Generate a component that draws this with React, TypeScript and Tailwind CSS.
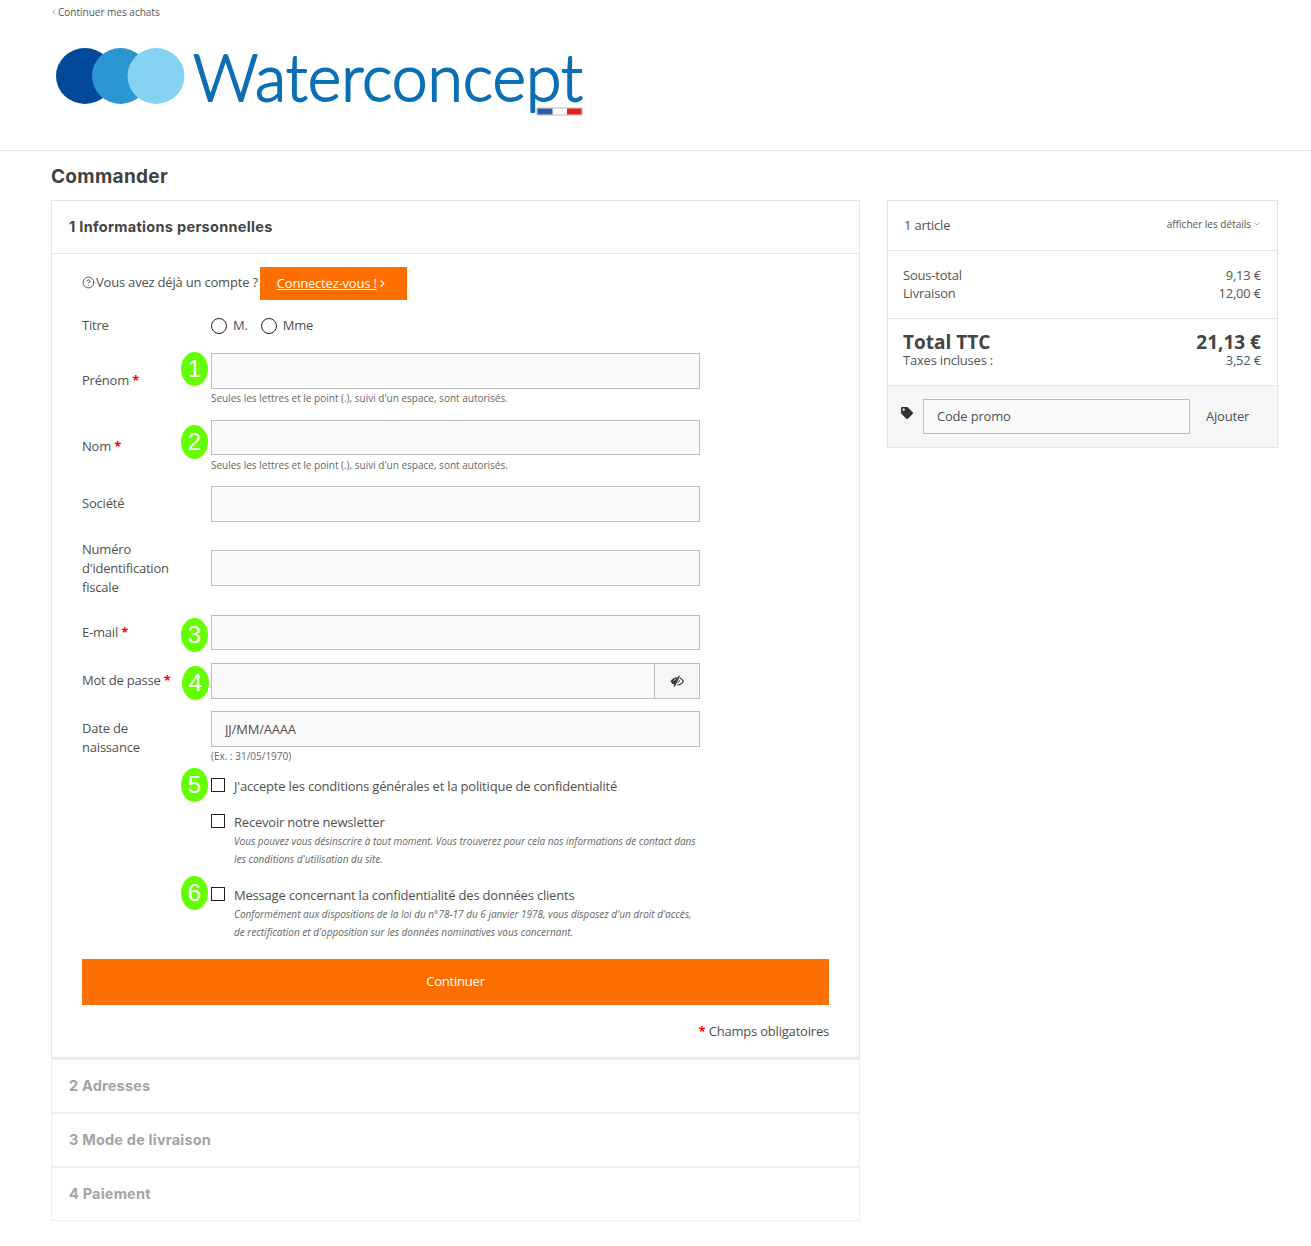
import React from 'react';
import { ChevronDown, ChevronLeft, ChevronRight, CircleHelp } from 'lucide-react';
import { FaTag } from 'react-icons/fa';

const Star = () => <span className="font-bold text-[#ff0000]">*</span>;

const Badge = ({ n, top }: { n: number; top: number }) => (
  <span
    className="absolute left-[-30px] flex h-[34px] w-[27px] items-center justify-center rounded-[50%] bg-[#66ff00] font-['Liberation_Sans',sans-serif] text-[24px] leading-none text-white"
    style={{ top }}
  >
    {n}
  </span>
);

const TextInput = ({ placeholder, h = 'h-[36px]' }: { placeholder?: string; h?: string }) => (
  <input
    placeholder={placeholder}
    className={`${h} block w-[489px] border border-[#bdbdbd] bg-[#fafafa] px-[13px] text-[13px] tracking-[-0.2px] text-[#505050] outline-none placeholder:text-[#505050]`}
  />
);

const Hint = ({ children, className = 'mt-[3px]' }: { children: React.ReactNode; className?: string }) => (
  <div className={`${className} text-[10px] leading-[14px] text-[#666]`}>{children}</div>
);

const Label = ({ children, className = '' }: { children: React.ReactNode; className?: string }) => (
  <label className={`block w-[129px] shrink-0 text-[13px] leading-[19px] tracking-[-0.2px] text-[#505050] ${className}`}>{children}</label>
);

const Check = ({ label, badge, children, className = '' }: { label: string; badge?: React.ReactNode; children?: React.ReactNode; className?: string }) => (
  <div className={`relative ml-[129px] w-[489px] ${className}`}>
    {badge}
    <span className="absolute left-0 top-px block h-[14px] w-[14px] border border-[#222] bg-white" />
    <div className="pl-[23px] text-[13px] leading-[19px] tracking-[-0.2px] text-[#505050]">{label}</div>
    {children && <div className="pl-[23px] text-[10px] italic leading-[18px] text-[#666]">{children}</div>}
  </div>
);

const EyeOff = () => (
  <svg width="14" height="12" viewBox="0 0 14 12" className="text-[#333]">
    <path d="M0.500 6.200C2.300 3.500 5 2.100 7.800 2.200L5 10C3 9.500 1.500 8 0.500 6.200Z" fill="currentColor" />
    <path d="M3.600 5.800C4 4.900 4.800 4.300 5.800 4.100" stroke="#f6f6f6" strokeWidth="0.900" fill="none" />
    <path d="M4.300 11.500L9.500 0.700" stroke="currentColor" strokeWidth="1.300" fill="none" />
    <path d="M9.800 3C11.300 3.600 12.500 4.800 13.400 6.200C12 8.400 9.800 9.800 7.200 10" stroke="currentColor" strokeWidth="1.200" fill="none" />
    <path d="M9.200 5.200C9.400 6.400 8.800 7.400 7.600 7.800" stroke="currentColor" strokeWidth="1" fill="none" />
  </svg>
);

const Logo = () => (
  <svg width="540" height="80" viewBox="0 0 540 80" className="block overflow-visible">
    <ellipse cx="34" cy="34" rx="29" ry="28" fill="#03499a" />
    <ellipse cx="69.500" cy="34" rx="28.500" ry="28" fill="#2a96d2" />
    <ellipse cx="105" cy="34" rx="28.500" ry="28" fill="#86d2f3" />
    <text
      x="142"
      y="59"
      fontFamily="Lato, sans-serif"
      fontWeight="300"
      fontSize="66"
      fill="#0a6fb5"
      stroke="#0a6fb5"
      strokeWidth="1.800"
      strokeLinejoin="round"
      textLength="390"
      lengthAdjust="spacingAndGlyphs"
    >
      Waterconcept
    </text>
    <rect x="486" y="66" width="45" height="7" fill="#fff" stroke="#bbb" strokeWidth="1" />
    <rect x="486.500" y="66.500" width="15" height="6" fill="#2f5aa5" />
    <rect x="516" y="66.500" width="14.500" height="6" fill="#e3201b" />
  </svg>
);

const Step = ({ title }: { title: string }) => (
  <div className="flex h-[54px] items-center border border-b-0 border-t-2 border-[#eee] bg-white pb-[1px] pl-[17px] font-['Inter',sans-serif] text-[14.500px] font-bold tracking-[0.2px] text-[#a3a3a3] last:h-[55px] last:border-b last:pb-0">
    {title}
  </div>
);

const Row2 = ({ a, b }: { a: string; b: string }) => (
  <div className="flex justify-between text-[13px] leading-[18px] tracking-[-0.2px] text-[#555]">
    <span>{a}</span>
    <span>{b}</span>
  </div>
);

export default function App() {
  return (
    <div className="min-h-[1246px] bg-white font-['Open_Sans',sans-serif] text-[#505050]">
      <header className="h-[151px] border-b border-[#e5e5e5] pl-[51px]">
        <a className="flex items-center pt-[5px] text-[10px] leading-[14px] text-[#555]">
          <ChevronLeft size={8} strokeWidth={1.500} className="-ml-[1px]" />
          Continuer mes achats
        </a>
        <div className="mt-[23px]">
          <Logo />
        </div>
      </header>

      <main className="flex items-start pl-[51px]">
        <div className="w-[809px] shrink-0">
          <h1 className="pb-[11px] pt-[13px] font-['Inter',sans-serif] text-[19px] font-bold leading-[25px] tracking-[0.3px] text-[#414141]">
            Commander
          </h1>

          <section className="border border-[#e5e5e5] bg-white">
            <h2 className="flex h-[53px] items-center border-b border-[#e5e5e5] pl-[17px] font-['Inter',sans-serif] text-[14.500px] font-bold tracking-[0.3px] text-[#444]">
              1 Informations personnelles
            </h2>

            <div className="pl-[30px] pr-[30px]">
              <div className="flex items-center pt-[13px] text-[13px] tracking-[-0.2px] text-[#505050]">
                <CircleHelp size={13} strokeWidth={1.800} className="mr-[1px] -mt-[2px]" />
                <span className="-mt-[2px]">Vous avez déjà un compte ?</span>
                <a className="ml-[2px] flex h-[33px] w-[147px] items-center bg-[#ff6f00] pl-[17px] text-white">
                  <span className="underline">Connectez-vous !</span>
                  <ChevronRight size={11} strokeWidth={2.500} />
                </a>
              </div>

              <div className="mt-[16px] flex h-[19px] items-center">
                <Label>Titre</Label>
                <span className="h-4 w-4 rounded-full border border-[#222] bg-white" />
                <span className="ml-[6px] text-[13px] tracking-[-0.2px]">M.</span>
                <span className="ml-[13px] h-4 w-4 rounded-full border border-[#222] bg-white" />
                <span className="ml-[6px] text-[13px] tracking-[-0.2px]">Mme</span>
              </div>

              <div className="mt-[18px] flex items-start">
                <Label className="pt-[18px]">
                  Prénom <Star />
                </Label>
                <div className="relative">
                  <Badge n={1} top={-1} />
                  <TextInput />
                  <Hint className="mt-[2px]">Seules les lettres et le point (.), suivi d'un espace, sont autorisés.</Hint>
                </div>
              </div>

              <div className="mt-[15px] flex items-start">
                <Label className="pt-[17px]">
                  Nom <Star />
                </Label>
                <div className="relative">
                  <Badge n={2} top={5} />
                  <TextInput h="h-[35px]" />
                  <Hint>Seules les lettres et le point (.), suivi d'un espace, sont autorisés.</Hint>
                </div>
              </div>

              <div className="mt-[14px] flex items-center">
                <Label className="-mt-[2px]">Société</Label>
                <TextInput />
              </div>

              <div className="mt-[18px] flex items-center">
                <Label className="pr-[20px]">Numéro d'identification fiscale</Label>
                <div className="-mt-[2px]">
                  <TextInput />
                </div>
              </div>

              <div className="mt-[18px] flex items-center">
                <Label>
                  E-mail <Star />
                </Label>
                <div className="relative">
                  <Badge n={3} top={3} />
                  <TextInput h="h-[35px]" />
                </div>
              </div>

              <div className="mt-[13px] flex items-center">
                <Label className="-mt-[2px]">
                  Mot de passe <Star />
                </Label>
                <div className="relative flex h-[36px] w-[489px] border border-[#bdbdbd] bg-[#fafafa]">
                  <Badge n={4} top={2} />
                  <div className="flex-1" />
                  <span className="flex w-[45px] items-center justify-center border-l border-[#bdbdbd] bg-[#f6f6f6]">
                    <EyeOff />
                  </span>
                </div>
              </div>

              <div className="mt-[12px] flex items-start">
                <Label className="pr-[50px] pt-[8px]">Date de naissance</Label>
                <div>
                  <TextInput placeholder="JJ/MM/AAAA" />
                  <Hint className="mt-[2px]">(Ex. : 31/05/1970)</Hint>
                </div>
              </div>

              <Check
                label="J'accepte les conditions générales et la politique de confidentialité"
                badge={<Badge n={5} top={-9} />}
                className="mt-[14px]"
              />
              <Check label="Recevoir notre newsletter" className="mt-[17px]">
                Vous pouvez vous désinscrire à tout moment. Vous trouverez pour cela nos informations de contact dans les conditions d'utilisation du site.
              </Check>
              <Check
                label="Message concernant la confidentialité des données clients"
                badge={<Badge n={6} top={-10} />}
                className="mt-[18px]"
              >
                Conformément aux dispositions de la loi du n°78-17 du 6 janvier 1978, vous disposez d'un droit d'accès, de rectification et d'opposition sur les données nominatives vous concernant.
              </Check>

              <button className="mt-[18px] block h-[46px] w-[747px] bg-[#ff6f00] text-[13px] tracking-[-0.2px] text-white">Continuer</button>
              <div className="flex h-[52px] items-center justify-end pt-[2px] text-[13px] tracking-[-0.2px] text-[#505050]">
                <Star />
                &nbsp;Champs obligatoires
              </div>
            </div>
          </section>

          <Step title="2 Adresses" />
          <Step title="3 Mode de livraison" />
          <Step title="4 Paiement" />
        </div>

        <aside className="ml-[27px] mt-[49px] w-[391px] border border-[#e5e5e5]">
          <div className="flex h-[50px] items-start justify-between border-b border-[#e5e5e5] px-[16px] pt-[15px]">
            <span className="text-[13px] leading-[18px] tracking-[-0.2px] text-[#505050]">1 article</span>
            <span className="flex items-center text-[10px] leading-[16px] text-[#555]">
              afficher les détails
              <ChevronDown size={8} strokeWidth={1.500} className="ml-[2px]" />
            </span>
          </div>
          <div className="h-[68px] border-b border-[#e5e5e5] pl-[15px] pr-[16px] pt-[15px]">
            <Row2 a="Sous-total" b="9,13 €" />
            <Row2 a="Livraison" b="12,00 €" />
          </div>
          <div className="h-[67px] border-b border-[#e5e5e5] pl-[15px] pr-[16px] pt-[13px]">
            <div className="flex justify-between text-[19px] font-bold leading-[21px] text-[#444]">
              <span>Total TTC</span>
              <span>21,13 €</span>
            </div>
            <div className="flex justify-between text-[13px] leading-[14px] tracking-[-0.2px] text-[#555]">
              <span>Taxes incluses :</span>
              <span>3,52 €</span>
            </div>
          </div>
          <div className="flex h-[61px] items-start bg-[#f6f6f6] pl-[13px] pt-[13px]">
            <FaTag size={12} className="mt-[8px] text-[#333]" />
            <input
              placeholder="Code promo"
              className="ml-[10px] h-[35px] w-[267px] border border-[#bdbdbd] bg-[#fafafa] px-[13px] pb-[2px] text-[13px] tracking-[-0.2px] outline-none placeholder:text-[#505050]"
            />
            <span className="ml-[16px] mt-[8px] text-[13px] leading-[18px] tracking-[-0.2px] text-[#505050]">Ajouter</span>
          </div>
        </aside>
      </main>
    </div>
  );
}
